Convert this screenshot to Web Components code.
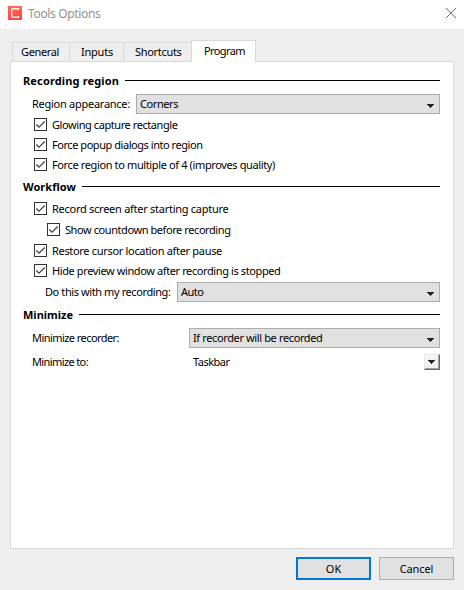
<!DOCTYPE html>
<html lang="en">
<head>
<meta charset="utf-8">
<title>Tools Options</title>
<style>
  html, body { margin: 0; height: 100%; overflow: hidden; }
  body { font: 11px/13px "Noto Sans", "Open Sans", sans-serif; color: #000; background: #efefef; }
</style>
</head>
<body>
<options-dialog></options-dialog>
<script>
const define = (name, html, setup) => {
  const template = document.createElement('template');
  template.innerHTML = html;
  customElements.define(name, class extends HTMLElement {
    connectedCallback() {
      if (this.shadowRoot) return;
      this.attachShadow({ mode: 'open' }).append(template.content.cloneNode(true));
      if (setup) setup(this, this.shadowRoot);
    }
  });
};

// A single-line label whose letter spacing is adjusted to fill the given advance width.
define('ui-label', `
  <style>
    :host { display: block; white-space: nowrap; flex: none; line-height: 13px; }
    span { display: inline-block; vertical-align: top; }
  </style><span><slot></slot></span>`, (host, root) => {
  const width = parseFloat(host.getAttribute('w'));
  const span = root.querySelector('span');
  const natural = span.getBoundingClientRect().width;
  span.style.letterSpacing = ((width - natural) / host.textContent.length) + 'px';
  host.style.width = width + 'px';
});

define('title-bar', `
  <style>
    :host { display: flex; height: 29px; background: #fff; color: #929292; padding: 0 8px; box-sizing: border-box; font-size: 12px; }
    .logo { margin: 6px 6px 0 0; }
    ::slotted(ui-label) { margin-top: 7px; }
    .close { margin: 8px 0 0 auto; }
    svg { display: block; flex: none; }
  </style>
  <svg class="logo" width="14" height="14" viewBox="0 0 14 14">
    <defs><linearGradient id="g" x2="0" y2="1"><stop stop-color="#ff6b50"/><stop offset="1" stop-color="#fb4548"/></linearGradient></defs>
    <rect width="14" height="14" rx=".6" fill="url(#g)"/>
    <path d="M10.5 4V2.7H4.7Q3.7 2.7 3.7 3.7V10.3Q3.7 11.3 4.7 11.3H10.5V10" fill="none" stroke="#fff0ed" stroke-width="1.4"/>
  </svg>
  <slot></slot>
  <svg class="close" width="10" height="10" viewBox="0 0 10 10"><path d="M0 0L10 10M10 0L0 10" stroke="#777" stroke-width="1"/></svg>`);

define('ui-tab', `
  <style>
    :host { display: block; box-sizing: border-box; height: 19px; border: 1px solid #d9d9d9; border-bottom: 0; margin-right: -1px; padding: 2px 0 0 8px; }
    :host([active]) { height: 22px; background: #fff; margin-bottom: -1px; padding: 3px 0 0 12px; position: relative; }
  </style><slot></slot>`);

define('ui-group', `
  <style>
    :host { display: block; }
    header { display: flex; height: 13px; font-weight: bold; }
    i { flex: 1; height: 1px; background: #000; margin: 6px 0 0 6px; }
  </style>
  <header><slot name="heading"></slot><i></i></header><slot></slot>`);

define('ui-check', `
  <style>
    :host { display: flex; height: 13px; gap: 5px; margin-left: 11px; }
    svg { flex: none; display: block; }
  </style>
  <svg width="13" height="13" viewBox="0 0 13 13"><rect x=".5" y=".5" width="12" height="12" fill="#fff" stroke="#333"/><path d="M2.3 6.5L5 9.2L10.7 3.5" fill="none" stroke="#444" stroke-width="1.25"/></svg>
  <slot></slot>`);

define('ui-select', `
  <style>
    :host { display: flex; justify-content: space-between; box-sizing: border-box; flex: 1; height: 20px; border: 1px solid #adadad; background: #e1e1e1; padding: 2px 5px 0 3px; }
    svg { display: block; margin-top: 7px; }
    :host([classic]) { border-color: transparent; background: none; padding-right: 0; margin-right: -1px; }
    :host([classic]) b { box-sizing: border-box; width: 16px; height: 16px; background: #f0f0f0; border: 1px solid; border-color: #e3e3e3 #696969 #696969 #e3e3e3; box-shadow: inset -1px -1px #a0a0a0, inset 1px 1px #fff; margin: -1px 0 0 0; }
    :host([classic]) svg { margin: 5px 0 0 3px; }
  </style>
  <slot></slot><b><svg width="7" height="4" viewBox="0 0 7 4" shape-rendering="crispEdges"><path d="M0 0H7V1H6V2H5V3H4V4H3V3H2V2H1V1H0Z" fill="#222"/></svg></b>`);

define('ui-row', `
  <style>:host { display: flex; height: 20px; } ::slotted(ui-label) { margin-top: 3px; }</style><slot></slot>`);

define('ui-button', `
  <style>
    :host { display: flex; justify-content: center; box-sizing: border-box; width: 75px; height: 23px; border: 1px solid #adadad; background: #e1e1e1; padding-top: 4px; }
    :host([default]) { border: 2px solid #0078d7; padding-top: 3px; }
  </style><slot></slot>`);

define('options-dialog', `
  <style>
    :host { display: flex; flex-direction: column; height: 590px; width: 464px; background: #efefef; }
    nav { display: flex; align-items: flex-end; height: 21px; margin: 11px 0 0 12px; }
    main { box-sizing: border-box; margin: 0 10px; height: 488px; border: 1px solid #d9d9d9; background: #fff; padding: 12px 13px 0 12px; }
    footer { display: flex; justify-content: flex-end; gap: 8px; margin: 8px 10px 0 0; }
  </style>
  <title-bar><ui-label w="72.5">Tools Options</ui-label></title-bar>
  <nav>
    <ui-tab style="width:58px"><ui-label w="38">General</ui-label></ui-tab>
    <ui-tab style="width:55px;padding-left:11px"><ui-label w="32">Inputs</ui-label></ui-tab>
    <ui-tab style="width:69px;padding-left:11px"><ui-label w="46.5">Shortcuts</ui-label></ui-tab>
    <ui-tab active style="width:65px"><ui-label w="41">Program</ui-label></ui-tab>
  </nav>
  <main>
    <ui-group>
      <ui-label slot="heading" w="96">Recording region</ui-label>
      <ui-row style="margin:7px 0 4px 9px"><ui-label w="98">Region appearance:</ui-label><ui-select style="margin-left:6px"><ui-label w="38">Corners</ui-label></ui-select></ui-row>
      <ui-check><ui-label w="125.5">Glowing capture rectangle</ui-label></ui-check>
      <ui-check style="margin-top:7px"><ui-label w="150.5">Force popup dialogs into region</ui-label></ui-check>
      <ui-check style="margin-top:7px"><ui-label w="223">Force region to multiple of 4 (improves quality)</ui-label></ui-check>
    </ui-group>
    <ui-group style="margin-top:9px">
      <ui-label slot="heading" w="53">Workflow</ui-label>
      <ui-check style="margin-top:9px"><ui-label w="176.5">Record screen after starting capture</ui-label></ui-check>
      <ui-check style="margin-top:8px;margin-left:24px"><ui-label w="165.5">Show countdown before recording</ui-label></ui-check>
      <ui-check style="margin-top:8px"><ui-label w="170">Restore cursor location after pause</ui-label></ui-check>
      <ui-check style="margin-top:7px"><ui-label w="228.5">Hide preview window after recording is stopped</ui-label></ui-check>
      <ui-row style="margin:5px 0 0 22px"><ui-label w="125.5">Do this with my recording:</ui-label><ui-select style="margin-left:6.5px"><ui-label w="22.5">Auto</ui-label></ui-select></ui-row>
    </ui-group>
    <ui-group style="margin-top:6px">
      <ui-label slot="heading" w="50">Minimize</ui-label>
      <ui-row style="margin:7px 0 0 9px"><ui-label w="87">Minimize recorder:</ui-label><ui-select style="margin-left:70px"><ui-label w="129.5">If recorder will be recorded</ui-label></ui-select></ui-row>
      <ui-row style="margin:4px 0 0 9px"><ui-label w="56">Minimize to:</ui-label><ui-select classic style="margin-left:101px"><ui-label w="36.5">Taskbar</ui-label></ui-select></ui-row>
    </ui-group>
  </main>
  <footer>
    <ui-button default><ui-label w="15.5">OK</ui-label></ui-button>
    <ui-button><ui-label w="33.5">Cancel</ui-label></ui-button>
  </footer>`);
</script>
</body>
</html>
